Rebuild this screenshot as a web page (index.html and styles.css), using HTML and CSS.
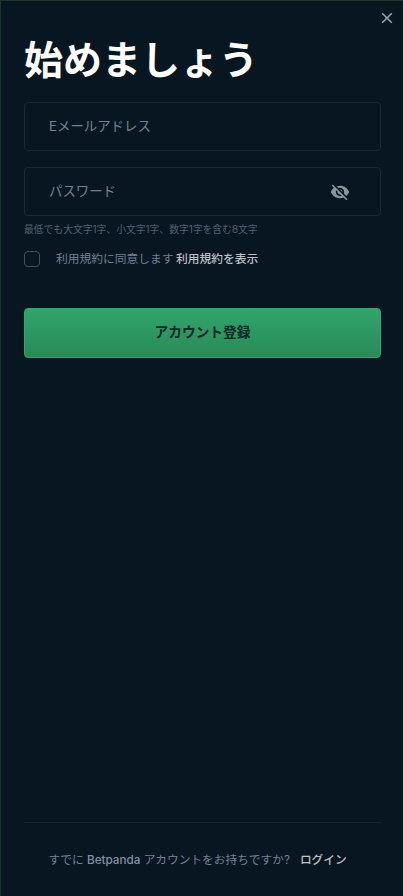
FILE: index.html
```html
<!DOCTYPE html>
<html lang="ja">
<head>
<meta charset="utf-8">
<meta name="viewport" content="width=device-width, initial-scale=1">
<title>アカウント登録</title>
<link rel="stylesheet" href="styles.css">
</head>
<body>
<main class="modal">
  <button class="close" type="button">
    <svg width="12" height="12" viewBox="0 0 12 12"><path d="M1.2 1.2 10.8 10.8M10.8 1.2 1.2 10.8"/></svg>
  </button>
  <h1 class="title">始めましょう</h1>
  <form class="form">
    <div class="field"><span class="placeholder">Eメールアドレス</span></div>
    <div class="field">
      <span class="placeholder">パスワード</span>
      <svg class="eye" width="20" height="20" viewBox="0 0 24 24"><path d="M12 7c2.76 0 5 2.24 5 5 0 .65-.13 1.26-.36 1.83l2.92 2.92c1.51-1.26 2.7-2.89 3.43-4.75-1.73-4.39-6-7.5-11-7.5-1.4 0-2.74.25-3.98.7l2.16 2.16C10.74 7.13 11.35 7 12 7zM2 4.27l2.28 2.28.46.46C3.08 8.3 1.78 10.02 1 12c1.73 4.39 6 7.5 11 7.5 1.55 0 3.03-.3 4.38-.84l.42.42L19.73 22 21 20.73 3.27 3 2 4.27zM7.53 9.8l1.55 1.55c-.05.21-.08.43-.08.65 0 1.66 1.34 3 3 3 .22 0 .44-.03.65-.08l1.55 1.55c-.67.33-1.41.53-2.2.53-2.76 0-5-2.24-5-5 0-.79.2-1.53.53-2.2zm4.31-.78 3.15 3.15.02-.16c0-1.66-1.34-3-3-3l-.17.01z"/></svg>
    </div>
    <p class="hint">最低でも大文字1字、小文字1字、数字1字を含む8文字</p>
    <div class="terms">
      <span class="checkbox"></span>
      <span>利用規約に同意します</span>
      <a class="link">利用規約を表示</a>
    </div>
    <button class="submit" type="button"><span class="label">アカウント登録</span></button>
  </form>
  <footer class="footer">
    <span>すでに <span class="brand">Betpanda</span> アカウントをお持ちですか?</span>
    <a class="link login">ログイン</a>
  </footer>
</main>
</body>
</html>
```
FILE: styles.css
```css
* { box-sizing: border-box; }
body {
  margin: 0;
  background: #081622;
  color: #728195;
  font-family: Inter, "Noto Sans CJK JP", sans-serif;
  white-space: nowrap;
}
button { font-family: inherit; }
svg { display: block; }
.modal {
  display: flex;
  flex-direction: column;
  height: 896px;
  padding: 0 22px 0 23px;
  border-top: 1px solid #1c352e;
  border-left: 1px solid #1c352e;
}
.close {
  align-self: flex-end;
  margin: 11px -12px 0 0;
  padding: 0;
  border: 0;
  background: none;
}
.close path { stroke: #99a6b8; stroke-width: 1.5; fill: none; }
.title {
  margin: 12px 0 0;
  height: 66px;
  line-height: 48px;
  font-size: 39px;
  font-weight: 700;
  color: #fff;
}
.form { display: flex; flex-direction: column; }
.field {
  display: flex;
  align-items: center;
  justify-content: space-between;
  height: 49px;
  margin-bottom: 16px;
  padding: 0 30px 0 24px;
  border: 1px solid #1b2934;
  border-radius: 4px;
}
.placeholder { font-size: 13.4px; line-height: 20px; padding-bottom: 1px; }
.eye { fill: #8e959b; }
.hint {
  margin: -10px 0 0;
  font-size: 9.8px;
  line-height: 16px;
  color: #536171;
}
.terms {
  display: flex;
  align-items: center;
  height: 16px;
  margin-top: 13px;
  font-size: 11.75px;
  line-height: 16px;
}
.checkbox {
  width: 16px;
  height: 16px;
  margin-right: 16px;
  border: 1px solid #43515f;
  border-radius: 4px;
}
.link { color: #bdc0c3; font-weight: 500; }
.terms .link { margin-left: 2.5px; }
.submit {
  display: flex;
  justify-content: center;
  height: 50px;
  margin-top: 41px;
  padding: 13px 0 0;
  border: 1px solid #36a46e;
  border-radius: 4px;
  background: linear-gradient(#30a66b, #298957);
  color: #08292b;
  font-size: 13.7px;
  font-weight: 700;
}
.label { line-height: 20px; }
.footer {
  display: flex;
  height: 74px;
  margin-top: auto;
  padding: 28px 0 0 24.5px;
  border-top: 1px solid #152530;
  font-size: 11.7px;
  line-height: 18px;
}
.brand { font-weight: 500; color: #8391a5; }
.login { margin-left: 10px; }
```
